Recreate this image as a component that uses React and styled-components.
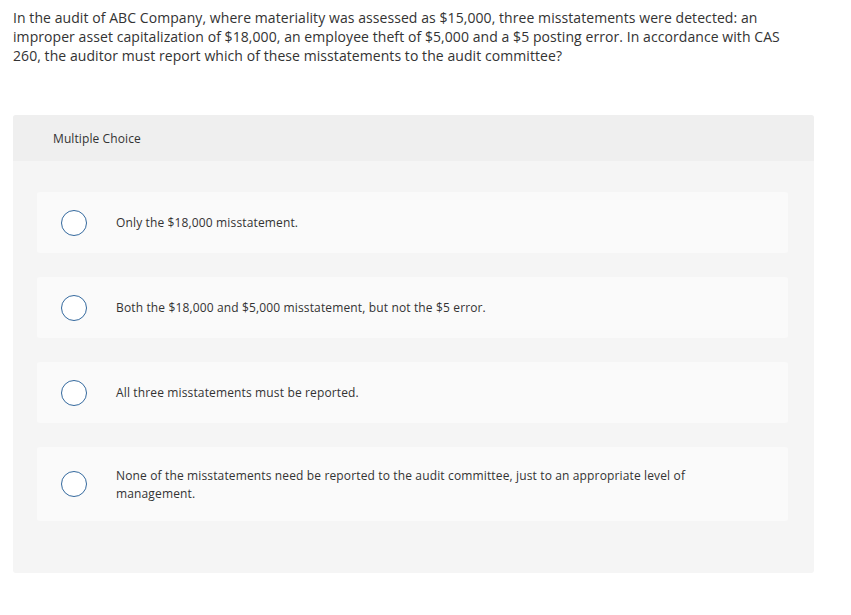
import React from "react";
import styled, { createGlobalStyle } from "styled-components";

const Global = createGlobalStyle`
  html, body { margin: 0; padding: 0; background: #ffffff; }
  body { font-family: "Open Sans", "Lato", sans-serif; color: #333333; }
`;

const Page = styled.div`
  width: 851px;
  padding: 8px 37px 0 13px;
  box-sizing: border-box;
`;

const Question = styled.p`
  margin: 0;
  font-size: 14px;
  line-height: 19px;
  letter-spacing: 0.07px;
  color: #333333;
  width: 786px;
`;

const Panel = styled.section`
  margin-top: 50px;
  width: 801px;
  border-radius: 3px;
  background: #f5f5f5;
  overflow: hidden;
`;

const Header = styled.div`
  height: 46px;
  background: #efefef;
  display: flex;
  align-items: center;
  padding-left: 40px;
  font-size: 12px;
  letter-spacing: 0.1px;
  color: #333333;
`;

const Options = styled.div`
  display: flex;
  flex-direction: column;
  gap: 24px;
  padding: 31px 26px 52px 24px;
`;

const Card = styled.label`
  display: flex;
  align-items: center;
  background: #fafafa;
  border-radius: 3px;
  box-sizing: border-box;
  min-height: ${(p) => (p.$multi ? "74px" : "61px")};
  padding: 0 40px 0 24px;
`;

const Radio = styled.span`
  flex: none;
  box-sizing: border-box;
  width: 26px;
  height: 26px;
  border-radius: 50%;
  border: 1.5px solid #34699e;
  background: #ffffff;
  margin-right: 29px;
`;

const OptionText = styled.span`
  font-size: 12px;
  line-height: 18px;
  letter-spacing: 0.14px;
  color: #333333;
  max-width: 600px;
  padding-top: ${(p) => (p.$multi ? "2px" : "0")};
`;

const choices = [
  "Only the $18,000 misstatement.",
  "Both the $18,000 and $5,000 misstatement, but not the $5 error.",
  "All three misstatements must be reported.",
  "None of the misstatements need be reported to the audit committee, just to an appropriate level of management.",
];

export default function App() {
  return (
    <>
      <Global />
      <Page>
        <Question>
          In the audit of ABC Company, where materiality was assessed as $15,000, three misstatements were detected: an
          improper asset capitalization of $18,000, an employee theft of $5,000 and a $5 posting error. In accordance with CAS
          260, the auditor must report which of these misstatements to the audit committee?
        </Question>
        <Panel>
          <Header>Multiple Choice</Header>
          <Options>
            {choices.map((c, i) => (
              <Card key={i} $multi={i === 3}>
                <Radio />
                <OptionText $multi={i === 3}>{c}</OptionText>
              </Card>
            ))}
          </Options>
        </Panel>
      </Page>
    </>
  );
}
